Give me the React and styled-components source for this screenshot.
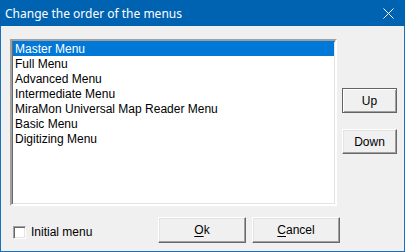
import React from "react"
import styled, { createGlobalStyle } from "styled-components"

const GlobalStyle = createGlobalStyle`
  html, body {
    margin: 0;
    padding: 0;
    background: #f0f0f0;
  }
  * {
    box-sizing: border-box;
  }
`

const StyledWindow = styled.div`
  width: 405px;
  height: 252px;
  border: 1px solid #1a6fbf;
  border-top: none;
  background: #f0f0f0;
  display: flex;
  flex-direction: column;
  font-family: "Liberation Sans", Arial, sans-serif;
  font-size: 12px;
  color: #000;
`

const StyledTitleBar = styled.div`
  height: 26px;
  margin: 0 -1px;
  background: #0063b1;
  display: flex;
  align-items: center;
  justify-content: space-between;
  padding: 0 11px 0 5px;
  color: #fff;
  font-family: "Noto Sans", "Open Sans", sans-serif;
  font-size: 12px;
`

const StyledClose = styled.svg`
  width: 11px;
  height: 11px;
`

const StyledBody = styled.div`
  flex: 1;
  display: flex;
  flex-direction: column;
  padding: 13px 7px 8px 9px;
`

const StyledMainRow = styled.div`
  display: flex;
  gap: 5px;
`

const StyledList = styled.ul`
  margin: 0;
  list-style: none;
  width: 327px;
  height: 167px;
  background: #fff;
  border: 2px solid;
  border-color: #a0a0a0 #fff #fff #a0a0a0;
  box-shadow: inset 1px 1px #696969, inset -1px -1px #e3e3e3;
  padding: 0 1px;
`

const StyledItem = styled.li`
  height: 15px;
  line-height: 17px;
  padding-left: 2px;
  white-space: nowrap;
  background: ${({ selected }) => (selected ? "#0078d7" : "transparent")};
  color: ${({ selected }) => (selected ? "#fff" : "#000")};
`

const StyledSideColumn = styled.div`
  display: flex;
  flex-direction: column;
  gap: 16px;
  padding-top: 49px;
`

const StyledButton = styled.button`
  width: ${({ wide }) => (wide ? "88px" : "55px")};
  height: ${({ wide }) => (wide ? "26px" : "25px")};
  padding: 0;
  background: #f0f0f0;
  font-family: "Liberation Sans", Arial, sans-serif;
  font-size: 12px;
  color: #000;
  border: 1px solid;
  border-color: ${({ focused }) =>
    focused ? "#646464" : "#fff #696969 #696969 #fff"};
  box-shadow: ${({ focused }) =>
    focused
      ? "inset 1px 1px #fff, inset -1px -1px #a0a0a0"
      : "inset -1px -1px #a0a0a0, inset 1px 1px #e3e3e3"};

  u {
    text-decoration-thickness: 1px;
    text-underline-offset: 2px;
  }
`

const StyledBottomRow = styled.div`
  display: flex;
  align-items: center;
  margin-top: 11px;
  gap: 6px;
`

const StyledCheckLabel = styled.label`
  width: 142px;
  display: flex;
  align-items: center;
  gap: 5px;
  padding: 4px 0 0 3px;
`

const StyledCheckBox = styled.span`
  width: 13px;
  height: 13px;
  background: #fff;
  border: 1px solid;
  border-color: #a0a0a0 #fff #fff #a0a0a0;
  box-shadow: inset 1px 1px #696969, inset -1px -1px #e3e3e3;
`

const menus = [
  "Master Menu",
  "Full Menu",
  "Advanced Menu",
  "Intermediate Menu",
  "MiraMon Universal Map Reader Menu",
  "Basic Menu",
  "Digitizing Menu",
]

const App = () => (
  <StyledWindow>
    <GlobalStyle />
    <StyledTitleBar>
      <span>Change the order of the menus</span>
      <StyledClose viewBox="0 0 11 11">
        <path d="M0.5 0.5 L10.5 10.5 M10.5 0.5 L0.5 10.5" stroke="#fff" strokeWidth="1" />
      </StyledClose>
    </StyledTitleBar>
    <StyledBody>
      <StyledMainRow>
        <StyledList>
          {menus.map((menu, i) => (
            <StyledItem key={menu} selected={i === 0}>
              {menu}
            </StyledItem>
          ))}
        </StyledList>
        <StyledSideColumn>
          <StyledButton focused>Up</StyledButton>
          <StyledButton>Down</StyledButton>
        </StyledSideColumn>
      </StyledMainRow>
      <StyledBottomRow>
        <StyledCheckLabel>
          <StyledCheckBox />
          Initial menu
        </StyledCheckLabel>
        <StyledButton wide>
          <u>O</u>k
        </StyledButton>
        <StyledButton wide>
          <u>C</u>ancel
        </StyledButton>
      </StyledBottomRow>
    </StyledBody>
  </StyledWindow>
)

export default App
